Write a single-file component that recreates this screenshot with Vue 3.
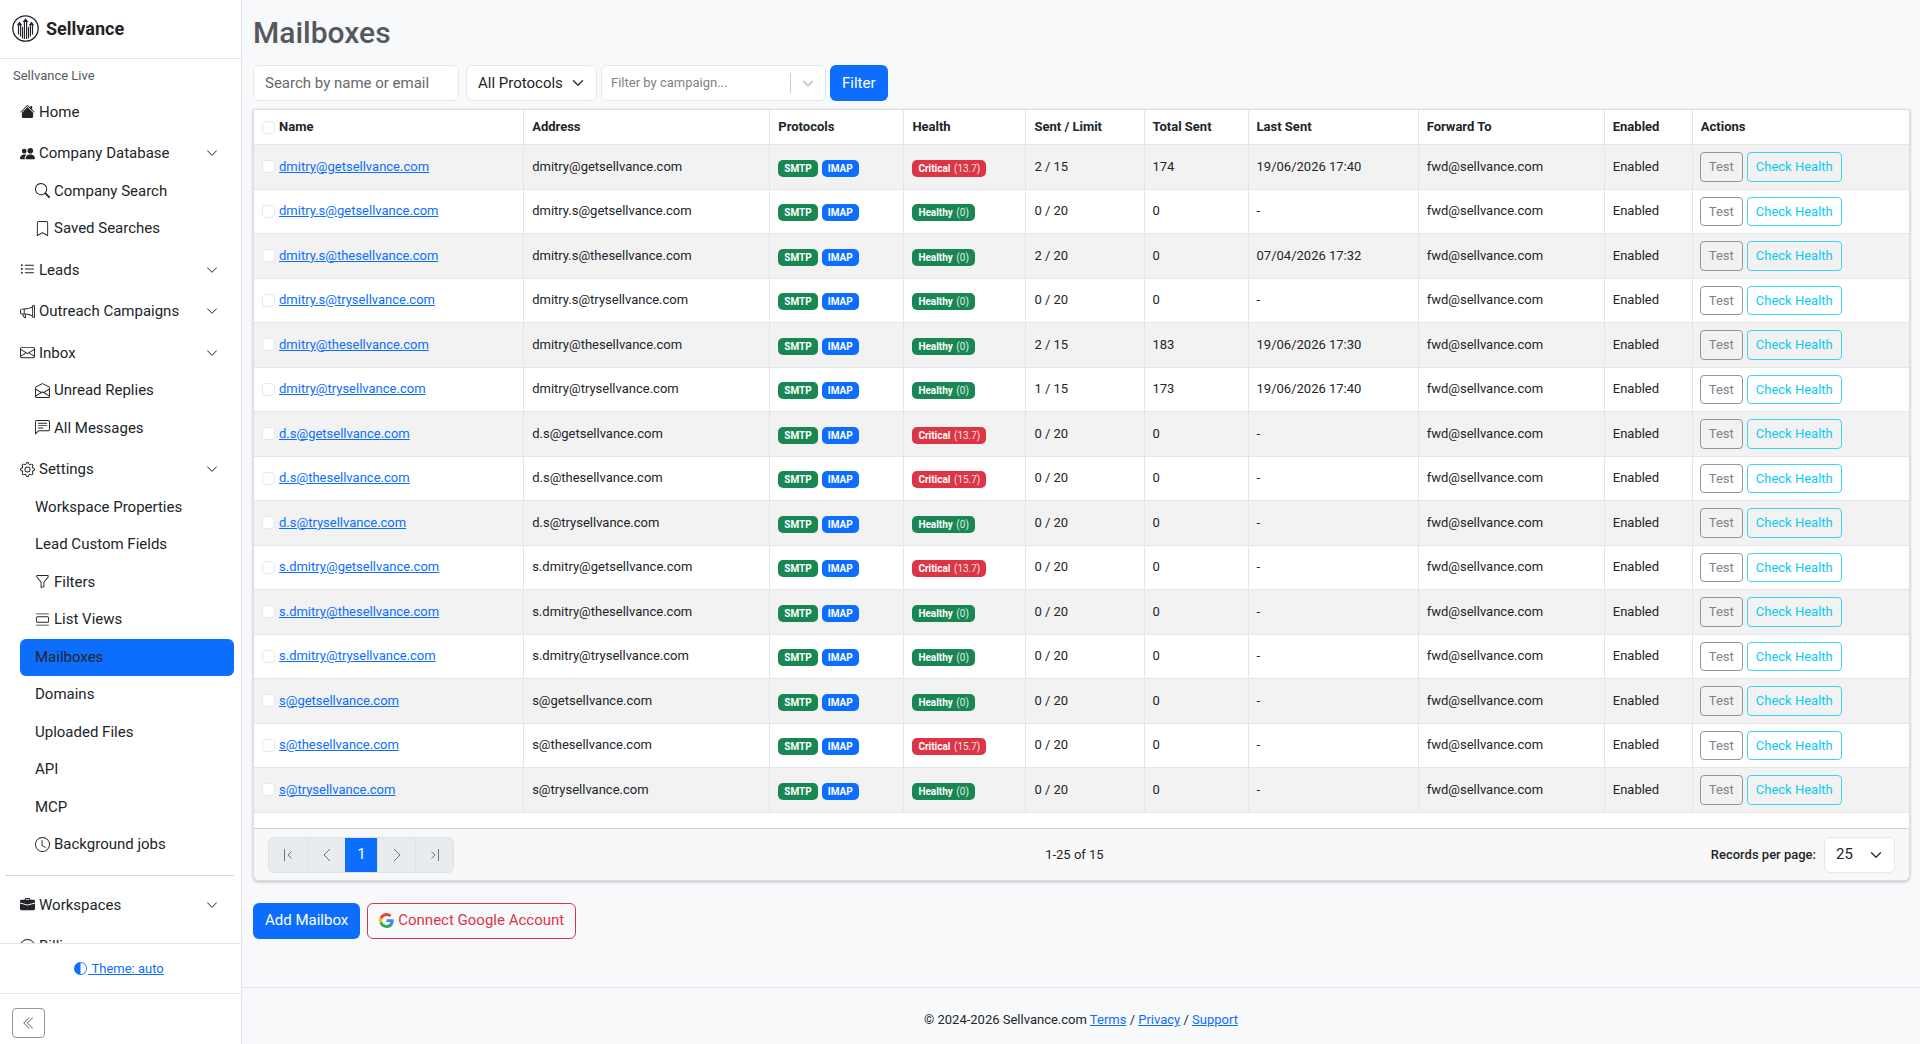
<script setup>
import { ref } from 'vue'

const icons = {
  home: ['M8.707 1.5a1 1 0 0 0-1.414 0L.646 8.146a.5.5 0 0 0 .708.708L8 2.207l6.646 6.647a.5.5 0 0 0 .708-.708L13 5.793V2.5a.5.5 0 0 0-.5-.5h-1a.5.5 0 0 0-.5.5v1.293z', 'm8 3.293 6 6V13.5a1.5 1.5 0 0 1-1.5 1.5h-9A1.5 1.5 0 0 1 2 13.5V9.293z'],
  people: ['M7 14s-1 0-1-1 1-4 5-4 5 3 5 4-1 1-1 1zm4-6a3 3 0 1 0 0-6 3 3 0 0 0 0 6m-5.784 6A2.24 2.24 0 0 1 5 13c0-1.355.68-2.75 1.936-3.72A6.3 6.3 0 0 0 5 9c-4 0-5 3-5 4s1 1 1 1zM4.5 8a2.5 2.5 0 1 0 0-5 2.5 2.5 0 0 0 0 5'],
  search: ['M11.742 10.344a6.5 6.5 0 1 0-1.397 1.398h-.001q.044.06.098.115l3.85 3.85a1 1 0 0 0 1.415-1.414l-3.85-3.85a1 1 0 0 0-.115-.1zM12 6.5a5.5 5.5 0 1 1-11 0 5.5 5.5 0 0 1 11 0'],
  bookmark: ['M2 2a2 2 0 0 1 2-2h8a2 2 0 0 1 2 2v13.5a.5.5 0 0 1-.777.416L8 13.101l-5.223 2.815A.5.5 0 0 1 2 15.5zm2-1a1 1 0 0 0-1 1v12.566l4.723-2.482a.5.5 0 0 1 .554 0L13 14.566V2a1 1 0 0 0-1-1z'],
  list: ['M5 11.5a.5.5 0 0 1 .5-.5h9a.5.5 0 0 1 0 1h-9a.5.5 0 0 1-.5-.5m0-4a.5.5 0 0 1 .5-.5h9a.5.5 0 0 1 0 1h-9a.5.5 0 0 1-.5-.5m0-4a.5.5 0 0 1 .5-.5h9a.5.5 0 0 1 0 1h-9a.5.5 0 0 1-.5-.5m-3 1a1 1 0 1 0 0-2 1 1 0 0 0 0 2m0 4a1 1 0 1 0 0-2 1 1 0 0 0 0 2m0 4a1 1 0 1 0 0-2 1 1 0 0 0 0 2'],
  megaphone: ['M13 2.5a1.5 1.5 0 0 1 3 0v11a1.5 1.5 0 0 1-3 0v-.214c-2.162-1.241-4.49-1.843-6.912-2.083l.405 2.712A1 1 0 0 1 5.51 15.1h-.548a1 1 0 0 1-.916-.599l-1.85-3.49-.202-.003A2.014 2.014 0 0 1 0 9V7a2.02 2.02 0 0 1 1.992-2.013 75 75 0 0 0 2.483-.075c3.043-.154 6.148-.849 8.525-2.199zm1 0v11a.5.5 0 0 0 1 0v-11a.5.5 0 0 0-1 0m-1 1.35c-2.344 1.205-5.209 1.842-8 2.033v4.233q.27.015.537.036c2.568.189 5.093.744 7.463 1.993zm-9 6.215v-4.13a95 95 0 0 1-1.992.052A1.02 1.02 0 0 0 1 7v2c0 .55.448 1.002 1.006 1.009A61 61 0 0 1 4 10.065m-.657.975 1.609 3.037.01.024h.548l-.002-.014-.443-2.966a68 68 0 0 0-1.722-.082z'],
  envelope: ['M0 4a2 2 0 0 1 2-2h12a2 2 0 0 1 2 2v8a2 2 0 0 1-2 2H2a2 2 0 0 1-2-2zm2-1a1 1 0 0 0-1 1v.217l7 4.2 7-4.2V4a1 1 0 0 0-1-1zm13 2.383-4.708 2.825L15 11.105zm-.034 6.876-5.64-3.471L8 9.583l-1.326-.795-5.64 3.47A1 1 0 0 0 2 13h12a1 1 0 0 0 .966-.741M1 11.105l4.708-2.897L1 5.383z'],
  envelopeOpen: ['M8.47 1.318a1 1 0 0 0-.94 0l-6 3.2A1 1 0 0 0 1 5.4v.817l5.75 3.45L8 8.917l1.25.75L15 6.217V5.4a1 1 0 0 0-.53-.882zM15 7.383l-4.778 2.867L15 13.117zm-.035 6.88L8 10.082l-6.965 4.18A1 1 0 0 0 2 15h12a1 1 0 0 0 .965-.738ZM1 13.116l4.778-2.867L1 7.383v5.734ZM7.059.435a2 2 0 0 1 1.882 0l6 3.2A2 2 0 0 1 16 5.4V14a2 2 0 0 1-2 2H2a2 2 0 0 1-2-2V5.4a2 2 0 0 1 1.059-1.765z'],
  chat: ['M14 1a1 1 0 0 1 1 1v8a1 1 0 0 1-1 1H4.414A2 2 0 0 0 3 11.586l-2 2V2a1 1 0 0 1 1-1zM2 0a2 2 0 0 0-2 2v12.793a.5.5 0 0 0 .854.353l2.853-2.853A1 1 0 0 1 4.414 12H14a2 2 0 0 0 2-2V2a2 2 0 0 0-2-2z', 'M3 3.5a.5.5 0 0 1 .5-.5h9a.5.5 0 0 1 0 1h-9a.5.5 0 0 1-.5-.5M3 6a.5.5 0 0 1 .5-.5h9a.5.5 0 0 1 0 1h-9A.5.5 0 0 1 3 6m0 2.5a.5.5 0 0 1 .5-.5h5a.5.5 0 0 1 0 1h-5a.5.5 0 0 1-.5-.5'],
  gear: ['M8 4.754a3.246 3.246 0 1 0 0 6.492 3.246 3.246 0 0 0 0-6.492M5.754 8a2.246 2.246 0 1 1 4.492 0 2.246 2.246 0 0 1-4.492 0', 'M9.796 1.343c-.527-1.79-3.065-1.79-3.592 0l-.094.319a.873.873 0 0 1-1.255.52l-.292-.16c-1.64-.892-3.433.902-2.54 2.541l.159.292a.873.873 0 0 1-.52 1.255l-.319.094c-1.79.527-1.79 3.065 0 3.592l.319.094a.873.873 0 0 1 .52 1.255l-.16.292c-.892 1.64.901 3.434 2.541 2.54l.292-.159a.873.873 0 0 1 1.255.52l.094.319c.527 1.79 3.065 1.79 3.592 0l.094-.319a.873.873 0 0 1 1.255-.52l.292.16c1.64.893 3.434-.902 2.54-2.541l-.159-.292a.873.873 0 0 1 .52-1.255l.319-.094c1.79-.527 1.79-3.065 0-3.592l-.319-.094a.873.873 0 0 1-.52-1.255l.16-.292c.893-1.64-.902-3.433-2.541-2.54l-.292.159a.873.873 0 0 1-1.255-.52zm-2.633.283c.246-.835 1.428-.835 1.674 0l.094.319a1.873 1.873 0 0 0 2.693 1.115l.291-.16c.764-.415 1.6.42 1.184 1.185l-.159.292a1.873 1.873 0 0 0 1.116 2.692l.318.094c.835.246.835 1.428 0 1.674l-.319.094a1.873 1.873 0 0 0-1.115 2.693l.16.291c.415.764-.42 1.6-1.185 1.184l-.291-.159a1.873 1.873 0 0 0-2.693 1.116l-.094.318c-.246.835-1.428.835-1.674 0l-.094-.319a1.873 1.873 0 0 0-2.692-1.115l-.292.16c-.764.415-1.6-.42-1.184-1.185l.159-.291A1.873 1.873 0 0 0 1.945 8.93l-.319-.094c-.835-.246-.835-1.428 0-1.674l.319-.094A1.873 1.873 0 0 0 3.06 4.377l-.16-.292c-.415-.764.42-1.6 1.185-1.184l.292.159a1.873 1.873 0 0 0 2.692-1.115z'],
  funnel: ['M1.5 1.5A.5.5 0 0 1 2 1h12a.5.5 0 0 1 .5.5v2a.5.5 0 0 1-.128.334L10 8.692V13.5a.5.5 0 0 1-.342.474l-3 1A.5.5 0 0 1 6 14.5V8.692L1.628 3.834A.5.5 0 0 1 1.5 3.5zm1 .5v1.308l4.372 4.858A.5.5 0 0 1 7 8.5v5.306l2-.666V8.5a.5.5 0 0 1 .128-.334L13.5 3.308V2z'],
  viewList: ['M3 4.5h10a2 2 0 0 1 2 2v3a2 2 0 0 1-2 2H3a2 2 0 0 1-2-2v-3a2 2 0 0 1 2-2m0 1a1 1 0 0 0-1 1v3a1 1 0 0 0 1 1h10a1 1 0 0 0 1-1v-3a1 1 0 0 0-1-1zM1 2a.5.5 0 0 1 .5-.5h13a.5.5 0 0 1 0 1h-13A.5.5 0 0 1 1 2m0 12a.5.5 0 0 1 .5-.5h13a.5.5 0 0 1 0 1h-13A.5.5 0 0 1 1 14'],
  clock: ['M8 3.5a.5.5 0 0 0-1 0V9a.5.5 0 0 0 .252.434l3.5 2a.5.5 0 0 0 .496-.868L8 8.71z', 'M8 16A8 8 0 1 0 8 0a8 8 0 0 0 0 16m7-8A7 7 0 1 1 1 8a7 7 0 0 1 14 0'],
  briefcase: ['M6.5 1A1.5 1.5 0 0 0 5 2.5V3H1.5A1.5 1.5 0 0 0 0 4.5v1.384l7.614 2.03a1.5 1.5 0 0 0 .772 0L16 5.884V4.5A1.5 1.5 0 0 0 14.5 3H11v-.5A1.5 1.5 0 0 0 9.5 1zm0 1h3a.5.5 0 0 1 .5.5V3H6v-.5a.5.5 0 0 1 .5-.5', 'M0 12.5A1.5 1.5 0 0 0 1.5 14h13a1.5 1.5 0 0 0 1.5-1.5V6.85L8.129 8.947a.5.5 0 0 1-.258 0L0 6.85z'],
  coin: ['M5.5 9.511c.076.954.83 1.697 2.182 1.785V12h.6v-.709c1.4-.098 2.218-.846 2.218-1.932 0-.987-.626-1.496-1.745-1.76l-.473-.112V5.57c.6.068.982.396 1.074.85h1.052c-.076-.919-.864-1.638-2.126-1.716V4h-.6v.719c-1.195.117-2.01.836-2.01 1.853 0 .9.606 1.472 1.613 1.707l.397.098v2.034c-.615-.093-1.022-.43-1.114-.9z', 'M8 15A7 7 0 1 1 8 1a7 7 0 0 1 0 14m0 1A8 8 0 1 0 8 0a8 8 0 0 0 0 16'],
}

const menu = [
  { label: 'Home', icon: 'home' },
  {
    label: 'Company Database', icon: 'people', open: true,
    items: [
      { label: 'Company Search', icon: 'search' },
      { label: 'Saved Searches', icon: 'bookmark' },
    ],
  },
  { label: 'Leads', icon: 'list', open: true },
  { label: 'Outreach Campaigns', icon: 'megaphone', open: true },
  {
    label: 'Inbox', icon: 'envelope', open: true,
    items: [
      { label: 'Unread Replies', icon: 'envelopeOpen' },
      { label: 'All Messages', icon: 'chat' },
    ],
  },
  {
    label: 'Settings', icon: 'gear', open: true,
    items: [
      { label: 'Workspace Properties' },
      { label: 'Lead Custom Fields' },
      { label: 'Filters', icon: 'funnel' },
      { label: 'List Views', icon: 'viewList' },
      { label: 'Mailboxes', active: true },
      { label: 'Domains' },
      { label: 'Uploaded Files' },
      { label: 'API' },
      { label: 'MCP' },
      { label: 'Background jobs', icon: 'clock' },
    ],
  },
  { label: 'Workspaces', icon: 'briefcase', open: true, divided: true },
  { label: 'Billing', icon: 'coin' },
]

const columns = [
  { label: 'Address', width: 246 },
  { label: 'Protocols', width: 134 },
  { label: 'Health', width: 122 },
  { label: 'Sent / Limit', width: 118 },
  { label: 'Total Sent', width: 104 },
  { label: 'Last Sent', width: 170 },
  { label: 'Forward To', width: 186 },
  { label: 'Enabled', width: 88 },
  { label: 'Actions', width: 216 },
]

const row = (email, score, sent, total = '0', last = '-') => ({ email, score, sent, total, last })
const rows = [
  row('dmitry@getsellvance.com', 13.7, '2 / 15', '174', '19/06/2026 17:40'),
  row('dmitry.s@getsellvance.com', 0, '0 / 20'),
  row('dmitry.s@thesellvance.com', 0, '2 / 20', '0', '07/04/2026 17:32'),
  row('dmitry.s@trysellvance.com', 0, '0 / 20'),
  row('dmitry@thesellvance.com', 0, '2 / 15', '183', '19/06/2026 17:30'),
  row('dmitry@trysellvance.com', 0, '1 / 15', '173', '19/06/2026 17:40'),
  row('d.s@getsellvance.com', 13.7, '0 / 20'),
  row('d.s@thesellvance.com', 15.7, '0 / 20'),
  row('d.s@trysellvance.com', 0, '0 / 20'),
  row('s.dmitry@getsellvance.com', 13.7, '0 / 20'),
  row('s.dmitry@thesellvance.com', 0, '0 / 20'),
  row('s.dmitry@trysellvance.com', 0, '0 / 20'),
  row('s@getsellvance.com', 0, '0 / 20'),
  row('s@thesellvance.com', 15.7, '0 / 20'),
  row('s@trysellvance.com', 0, '0 / 20'),
]

const protocol = ref('All Protocols')
const perPage = ref('25')
</script>

<template>
  <div class="layout">
    <aside class="sidebar">
      <a class="brand" href="#">
        <svg class="logo" viewBox="0 0 27 27" fill="none" stroke="currentColor" aria-hidden="true">
          <circle cx="13.5" cy="13.5" r="12.7" stroke-width="1.3" />
          <path stroke-width="1.2" d="M6.500 9v10.500M8.600 9v12.500M12.400 6v18M14.600 6v18M18.400 9v12.500M20.500 9v10.500" />
          <path stroke-width="1" d="M10.500 12v11.500M16.500 12v11.500" />
          <path fill="currentColor" stroke="none" d="M4.800 10.200 7.500 6.500l2.700 3.700zM10.600 7 13.500 3.200 16.400 7zM16.800 10.200l2.700-3.700 2.700 3.700z" />
        </svg>
        <span>Sellvance</span>
      </a>
      <nav class="nav">
        <div class="workspace">Sellvance Live</div>
        <ul class="menu">
          <li v-for="group in menu" :key="group.label" :class="{ divided: group.divided }">
            <a class="item" href="#">
              <svg class="icon" viewBox="0 0 16 16" aria-hidden="true">
                <path v-for="d in icons[group.icon]" :key="d" :d="d" />
              </svg>
              <span>{{ group.label }}</span>
              <svg v-if="group.open" class="caret" viewBox="0 0 16 16" aria-hidden="true">
                <path d="M1.646 4.646a.5.5 0 0 1 .708 0L8 10.293l5.646-5.647a.5.5 0 0 1 .708.708l-6 6a.5.5 0 0 1-.708 0l-6-6a.5.5 0 0 1 0-.708" />
              </svg>
            </a>
            <ul v-if="group.items" class="submenu">
              <li v-for="item in group.items" :key="item.label">
                <a class="item sub" :class="{ active: item.active }" href="#">
                  <svg v-if="item.icon" class="icon" viewBox="0 0 16 16" aria-hidden="true">
                    <path v-for="d in icons[item.icon]" :key="d" :d="d" />
                  </svg>
                  <span>{{ item.label }}</span>
                </a>
              </li>
            </ul>
          </li>
        </ul>
      </nav>
      <div class="theme">
        <a href="#"><svg class="half" viewBox="0 0 16 16" aria-hidden="true"><path d="M8 15A7 7 0 1 0 8 1zm0 1A8 8 0 1 1 8 0a8 8 0 0 1 0 16" /></svg>&nbsp;Theme: auto</a>
      </div>
      <div class="collapse">
        <button class="collapse-btn" type="button" aria-label="Collapse sidebar">
          <svg viewBox="0 0 16 16" aria-hidden="true">
            <path d="M8.354 1.646a.5.5 0 0 1 0 .708L2.707 8l5.647 5.646a.5.5 0 0 1-.708.708l-6-6a.5.5 0 0 1 0-.708l6-6a.5.5 0 0 1 .708 0" />
            <path d="M12.354 1.646a.5.5 0 0 1 0 .708L6.707 8l5.647 5.646a.5.5 0 0 1-.708.708l-6-6a.5.5 0 0 1 0-.708l6-6a.5.5 0 0 1 .708 0" />
          </svg>
        </button>
      </div>
    </aside>

    <div class="page">
      <main class="content">
        <h1>Mailboxes</h1>

        <form class="filters" @submit.prevent>
          <input class="field search" type="text" placeholder="Search by name or email" aria-label="Search by name or email" />
          <select v-model="protocol" class="field select" aria-label="Protocol">
            <option>All Protocols</option>
            <option>SMTP</option>
            <option>IMAP</option>
          </select>
          <div class="field combo">
            <input type="text" role="combobox" aria-expanded="false" placeholder="Filter by campaign..." aria-label="Filter by campaign" />
            <span class="combo-arrow">
              <svg viewBox="0 0 20 20" aria-hidden="true"><path d="M4.516 7.548c0.436-0.446 1.043-0.481 1.576 0l3.908 3.747 3.908-3.747c0.533-0.481 1.141-0.446 1.574 0 0.436 0.445 0.408 1.197 0 1.615-0.406 0.418-4.695 4.502-4.695 4.502-0.217 0.223-0.502 0.335-0.787 0.335s-0.570-0.112-0.789-0.335c0 0-4.287-4.084-4.695-4.502s-0.436-1.170 0-1.615z" /></svg>
            </span>
          </div>
          <button class="btn primary" type="submit">Filter</button>
        </form>

        <section class="grid">
          <table>
            <colgroup>
              <col style="width: 270px" />
              <col v-for="c in columns" :key="c.label" :style="{ width: c.width + 'px' }" />
            </colgroup>
            <thead>
              <tr>
                <th scope="col">
                  <div class="name"><input type="checkbox" aria-label="Select all" /><span>Name</span></div>
                </th>
                <th v-for="c in columns" :key="c.label" scope="col">{{ c.label }}</th>
              </tr>
            </thead>
            <tbody>
              <tr v-for="r in rows" :key="r.email">
                <td>
                  <div class="name"><input type="checkbox" :aria-label="'Select ' + r.email" /><a href="#">{{ r.email }}</a></div>
                </td>
                <td>{{ r.email }}</td>
                <td>
                  <div class="badges"><span class="badge green">SMTP</span><span class="badge blue">IMAP</span></div>
                </td>
                <td>
                  <div class="badges">
                    <span class="badge" :class="r.score ? 'red' : 'green'">{{ r.score ? 'Critical' : 'Healthy' }} <small>({{ r.score }})</small></span>
                  </div>
                </td>
                <td>{{ r.sent }}</td>
                <td>{{ r.total }}</td>
                <td>{{ r.last }}</td>
                <td>fwd@sellvance.com</td>
                <td>Enabled</td>
                <td class="actions-cell">
                  <div class="actions">
                    <button class="btn-sm grey" type="button">Test</button>
                    <button class="btn-sm cyan" type="button">Check Health</button>
                  </div>
                </td>
              </tr>
            </tbody>
          </table>
          <div class="grid-footer">
            <div class="pager">
              <button type="button" aria-label="First page" disabled>
                <svg viewBox="0 0 16 16" aria-hidden="true"><path d="M4.500 2v12M11.500 4.500 8 8l3.500 3.500" /></svg>
              </button>
              <button type="button" aria-label="Previous page" disabled>
                <svg viewBox="0 0 16 16" aria-hidden="true"><path d="M11 2 5 8l6 6" /></svg>
              </button>
              <button type="button" class="current">1</button>
              <button type="button" aria-label="Next page" disabled>
                <svg viewBox="0 0 16 16" aria-hidden="true"><path d="m5 2 6 6-6 6" /></svg>
              </button>
              <button type="button" aria-label="Last page" disabled>
                <svg viewBox="0 0 16 16" aria-hidden="true"><path d="M11.500 2v12M4.500 4.500 8 8l-3.500 3.500" /></svg>
              </button>
            </div>
            <div class="range">1-25 of 15</div>
            <div class="per-page">
              <label for="per-page">Records per page:</label>
              <select id="per-page" v-model="perPage" class="field select">
                <option>25</option>
                <option>50</option>
                <option>100</option>
              </select>
            </div>
          </div>
        </section>

        <div class="bottom-actions">
          <button class="btn primary" type="button">Add Mailbox</button>
          <button class="btn danger" type="button">
            <svg viewBox="1 1 22 22" aria-hidden="true">
              <path fill="#4285f4" d="M22.560 12.250c0-.78-.07-1.530-.2-2.250H12v4.260h5.920c-.26 1.370-1.040 2.530-2.210 3.310v2.770h3.570c2.080-1.920 3.280-4.740 3.280-8.090z" />
              <path fill="#34a853" d="M12 23c2.970 0 5.460-.98 7.280-2.660l-3.570-2.770c-.98.66-2.230 1.060-3.710 1.060-2.860 0-5.290-1.930-6.160-4.530H2.180v2.840C3.990 20.530 7.700 23 12 23z" />
              <path fill="#fbbc05" d="M5.840 14.090c-.22-.66-.35-1.360-.35-2.090s.13-1.430.35-2.090V7.070H2.180C1.430 8.550 1 10.220 1 12s.43 3.450 1.180 4.930l2.850-2.220.81-.62z" />
              <path fill="#ea4335" d="M12 5.380c1.620 0 3.060.56 4.210 1.640l3.150-3.150C17.450 2.090 14.970 1 12 1 7.700 1 3.990 3.470 2.180 7.070l3.660 2.840c.87-2.600 3.300-4.530 6.160-4.530z" />
            </svg>
            Connect Google Account
          </button>
        </div>
      </main>
      <footer class="footer">
        <span>© 2024-2026 Sellvance.com <a href="#">Terms</a> / <a href="#">Privacy</a> / <a href="#">Support</a></span>
      </footer>
    </div>
  </div>
</template>

<style>
body {
  margin: 0;
  background: #f8f9fa;
}
</style>

<style scoped>
.layout {
  display: flex;
  min-height: 100vh;
  background: #f8f9fb;
  color: #212529;
  font-family: Roboto, "Liberation Sans", sans-serif;
  font-size: 15px;
  line-height: 1.5;
}
.layout *,
.layout *::before {
  box-sizing: border-box;
}
button,
input,
select {
  margin: 0;
  font: inherit;
  color: inherit;
}
a {
  color: #0d6efd;
}
ul {
  margin: 0;
  padding: 0;
  list-style: none;
}

/* Sidebar */
.sidebar {
  position: sticky;
  top: 0;
  flex: none;
  display: flex;
  flex-direction: column;
  width: 242px;
  height: 100vh;
  border-right: 1px solid #e3e6ec;
  background: #fff;
}
.brand {
  display: flex;
  align-items: center;
  gap: 7px;
  height: 59px;
  padding: 0 12px 2px;
  border-bottom: 1px solid #e3e6ec;
  color: #212529;
  font-size: 18px;
  font-weight: 700;
  text-decoration: none;
}
.logo {
  width: 27px;
  height: 27px;
}
.nav {
  flex: 1;
  min-height: 0;
  overflow: hidden;
  padding: 7px 7px 0 5px;
}
.workspace {
  padding: 0 8px 8px;
  color: #565b60;
  font-size: 13px;
}
.menu {
  display: flex;
  flex-direction: column;
  gap: 4px;
}
.item {
  display: flex;
  align-items: center;
  gap: 4px;
  margin-left: 15px;
  padding: 7px 16px 8px 0;
  border-radius: 6px;
  color: #212529;
  text-decoration: none;
}
.item.sub {
  padding-left: 15px;
}
.item.active {
  background: #0d6efd;
}
.icon {
  flex: none;
  width: 15px;
  height: 15px;
  fill: currentColor;
}
.caret {
  width: 12px;
  height: 12px;
  margin-left: auto;
  fill: currentColor;
}
.divided {
  margin-top: 7px;
  padding-top: 11px;
  border-top: 1px solid #d3d5d8;
}
.theme,
.collapse {
  flex: none;
  border-top: 1px solid #e3e6ec;
}
.theme {
  display: flex;
  justify-content: center;
  align-items: center;
  height: 50px;
  padding-right: 3px;
  font-size: 13px;
}
.half {
  width: 13px;
  height: 13px;
  margin-right: 1px;
  vertical-align: -2px;
  fill: currentColor;
}
.collapse {
  padding: 14px 12px 6px;
}
.collapse-btn {
  display: flex;
  align-items: center;
  justify-content: center;
  width: 33px;
  height: 30px;
  padding: 0;
  border: 1px solid #8f969c;
  border-radius: 4px;
  background: transparent;
  color: #6c757d;
}
.collapse-btn svg {
  width: 14px;
  height: 14px;
  fill: currentColor;
}

/* Page */
.page {
  flex: 1;
  min-width: 0;
  display: flex;
  flex-direction: column;
}
.content {
  flex: 1;
  padding: 15px 10px 46px 11px;
}
h1 {
  margin: 0 0 14px;
  color: #55585c;
  font-size: 30px;
  line-height: 36px;
  font-weight: 500;
}
.field {
  height: 36px;
  border: 1px solid #e6e9ec;
  border-radius: 6px;
  background: #fff;
}
.filters {
  display: flex;
  margin-bottom: 8px;
}
.search {
  width: 206px;
  margin-right: 7px;
  padding: 0 11px;
}
.search::placeholder {
  color: #65696e;
  opacity: 1;
}
.select {
  appearance: none;
  padding: 0 11px;
  background: #fff url("data:image/svg+xml,%3csvg xmlns='http://www.w3.org/2000/svg' viewBox='0 0 16 16'%3e%3cpath fill='none' stroke='%23343a40' stroke-linecap='round' stroke-linejoin='round' stroke-width='2' d='m2 5 6 6 6-6'/%3e%3c/svg%3e") no-repeat right 12px center / 12px 12px;
}
.filters .select {
  width: 131px;
  margin-right: 4px;
}
.combo {
  display: flex;
  align-items: center;
  width: 225px;
  margin-right: 4px;
}
.combo input {
  flex: 1;
  min-width: 0;
  padding: 0 9px;
  border: 0;
  background: transparent;
  font-size: 13px;
}
.combo input::placeholder {
  color: #808386;
  opacity: 1;
}
.combo-arrow {
  flex: none;
  display: flex;
  align-items: center;
  justify-content: center;
  width: 35px;
  height: 20px;
  border-left: 1px solid #ccc;
}
.combo-arrow svg {
  width: 18px;
  height: 18px;
  fill: #ccc;
}
.btn {
  height: 36px;
  padding: 0 11px;
  border: 1px solid transparent;
  border-radius: 6px;
}
.primary {
  background: #0d6efd;
  color: #fff;
}
.danger {
  display: flex;
  align-items: center;
  gap: 4px;
  border-color: #dc3545;
  background: transparent;
  color: #dc3545;
}
.danger svg {
  width: 15px;
  height: 15px;
}

/* Data grid */
.grid {
  border: 1px solid #dcdfe3;
  border-radius: 0 0 6px 6px;
  background: #fff;
  box-shadow: 0 1px 3px rgba(0, 0, 0, 0.25);
  font-size: 13px;
}
table {
  width: 100%;
  margin-bottom: 15px;
  border-collapse: separate;
  border-spacing: 0;
  table-layout: fixed;
  line-height: 20px;
}
th,
td {
  padding: 7px 8px;
  border-right: 1px solid #e3e6ea;
  border-bottom: 1px solid #e3e6ea;
  text-align: left;
  white-space: nowrap;
}
th {
  font-weight: 700;
}
th:last-child,
td:last-child {
  border-right: 0;
}
.actions-cell {
  padding-left: 7px;
}
tbody tr:nth-child(odd) td {
  background: #f2f2f2;
}
.name {
  display: flex;
  align-items: center;
  gap: 4px;
}
input[type="checkbox"] {
  appearance: none;
  width: 13px;
  height: 13px;
  border: 1px solid #e6e9ec;
  border-radius: 4px;
  background: #fff;
}
.badges {
  display: flex;
  gap: 4px;
  padding-top: 3px;
}
.badge {
  padding: 3px 6px;
  border-radius: 5px;
  color: #fff;
  font-size: 10px;
  line-height: 11px;
  font-weight: 700;
}
.badge small {
  margin-left: 1px;
  font-size: 10px;
  font-weight: 400;
  opacity: 0.85;
}
.green {
  background: #198754;
}
.blue {
  background: #0d6efd;
}
.red {
  background: #dc3545;
}
.actions {
  display: flex;
  gap: 4px;
}
.btn-sm {
  padding: 4px 8px;
  border: 1px solid;
  border-radius: 4px;
  background: transparent;
  font-size: 13px;
  line-height: 1.5;
}
.grey {
  border-color: #8f969c;
  color: #7c848b;
}
.cyan {
  border-color: #3dd5f3;
  color: #0dcaf0;
}
.grid-footer {
  display: flex;
  align-items: center;
  justify-content: space-between;
  padding: 8px 14px 7px;
  border-top: 1px solid #d0d3d6;
  border-radius: 0 0 6px 6px;
  background: #f8f8f8;
}
.pager {
  display: flex;
  overflow: hidden;
  border: 1px solid #dee2e6;
  border-radius: 6px;
  background: #e9ecef;
}
.pager button {
  display: flex;
  align-items: center;
  justify-content: center;
  width: 38px;
  height: 34px;
  padding: 0;
  border: 0;
  border-left: 1px solid #dee2e6;
  background: transparent;
  color: #6c757d;
}
.pager button:first-child {
  border-left: 0;
}
.pager .current {
  width: 32px;
  border-color: #0d6efd;
  background: #0d6efd;
  color: #fff;
  font-size: 15px;
}
.pager svg {
  width: 16px;
  height: 16px;
  fill: none;
  stroke: currentColor;
}
.range {
  padding-right: 16px;
}
.per-page {
  display: flex;
  align-items: center;
  gap: 8px;
}
.per-page label {
  font-weight: 500;
}
.per-page .select {
  width: 71px;
  font-size: 15px;
}
.bottom-actions {
  display: flex;
  gap: 7px;
  margin-top: 22px;
}
.footer {
  display: flex;
  align-items: center;
  justify-content: center;
  height: 57px;
  padding-top: 8px;
  border-top: 1px solid #e3e6ec;
  font-size: 13px;
}
</style>
